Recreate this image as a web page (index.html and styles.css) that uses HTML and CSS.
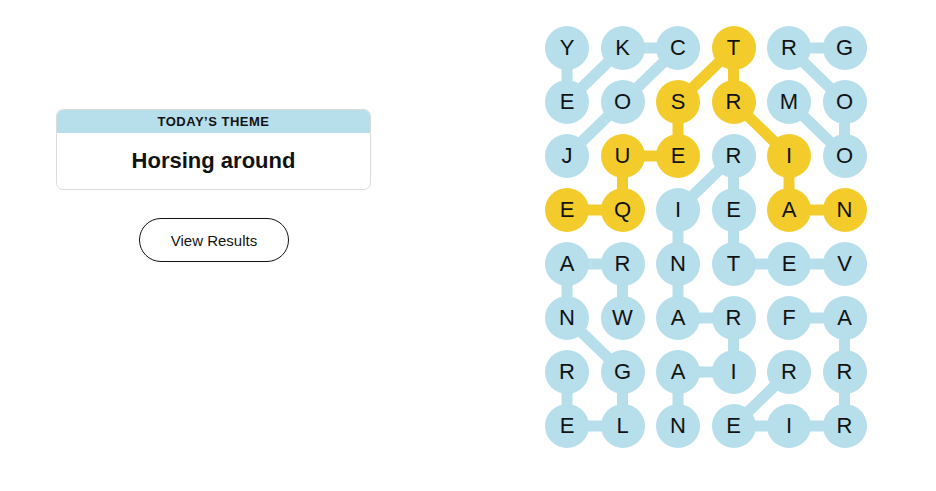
FILE: index.html
```html
<!DOCTYPE html>
<html lang="en">
<head>
<meta charset="utf-8">
<title>Strands</title>
<link rel="stylesheet" href="styles.css">
</head>
<body>
<div class="page">
  <div class="left">
    <div class="theme-card">
      <div class="theme-head">TODAY’S THEME</div>
      <div class="theme-body">Horsing around</div>
    </div>
    <div class="btn-row"><button class="results-btn">View Results</button></div>
  </div>
  <div class="board">
    <svg class="lines" width="322" height="422" viewBox="0 0 322 422">
      <g class="blue" stroke="#b6deeb" stroke-width="11" stroke-linecap="round">
        <!-- JOCKEY -->
        <line x1="22" y1="130" x2="77.5" y2="76"/>
        <line x1="77.5" y1="76" x2="133" y2="22"/>
        <line x1="133" y1="22" x2="77.5" y2="22"/>
        <line x1="77.5" y1="22" x2="22" y2="76"/>
        <line x1="22" y1="76" x2="22" y2="22"/>
        <!-- GROOM -->
        <line x1="299.5" y1="22" x2="244" y2="22"/>
        <line x1="244" y1="22" x2="299.5" y2="76"/>
        <line x1="299.5" y1="76" x2="299.5" y2="130"/>
        <line x1="299.5" y1="130" x2="244" y2="76"/>
        <!-- VETERINARIAN -->
        <line x1="299.5" y1="238" x2="244" y2="238"/>
        <line x1="244" y1="238" x2="188.5" y2="238"/>
        <line x1="188.5" y1="238" x2="188.5" y2="184"/>
        <line x1="188.5" y1="184" x2="188.5" y2="130"/>
        <line x1="188.5" y1="130" x2="133" y2="184"/>
        <line x1="133" y1="184" x2="133" y2="238"/>
        <line x1="133" y1="238" x2="133" y2="292"/>
        <line x1="133" y1="292" x2="188.5" y2="292"/>
        <line x1="188.5" y1="292" x2="188.5" y2="346"/>
        <line x1="188.5" y1="346" x2="133" y2="346"/>
        <line x1="133" y1="346" x2="133" y2="400"/>
        <!-- WRANGLER -->
        <line x1="77.5" y1="292" x2="77.5" y2="238"/>
        <line x1="77.5" y1="238" x2="22" y2="238"/>
        <line x1="22" y1="238" x2="22" y2="292"/>
        <line x1="22" y1="292" x2="77.5" y2="346"/>
        <line x1="77.5" y1="346" x2="77.5" y2="400"/>
        <line x1="77.5" y1="400" x2="22" y2="400"/>
        <line x1="22" y1="400" x2="22" y2="346"/>
        <!-- FARRIER -->
        <line x1="244" y1="292" x2="299.5" y2="292"/>
        <line x1="299.5" y1="292" x2="299.5" y2="346"/>
        <line x1="299.5" y1="346" x2="299.5" y2="400"/>
        <line x1="299.5" y1="400" x2="244" y2="400"/>
        <line x1="244" y1="400" x2="188.5" y2="400"/>
        <line x1="188.5" y1="400" x2="244" y2="346"/>
      </g>
      <g class="gold" stroke="#f3cc2b" stroke-width="11" stroke-linecap="round">
        <!-- EQUESTRIAN -->
        <line x1="22" y1="184" x2="77.5" y2="184"/>
        <line x1="77.5" y1="184" x2="77.5" y2="130"/>
        <line x1="77.5" y1="130" x2="133" y2="130"/>
        <line x1="133" y1="130" x2="133" y2="76"/>
        <line x1="133" y1="76" x2="188.5" y2="22"/>
        <line x1="188.5" y1="22" x2="188.5" y2="76"/>
        <line x1="188.5" y1="76" x2="244" y2="130"/>
        <line x1="244" y1="130" x2="244" y2="184"/>
        <line x1="244" y1="184" x2="299.5" y2="184"/>
      </g>
    </svg>

    <div class="cell">Y</div><div class="cell">K</div><div class="cell">C</div><div class="cell gold">T</div><div class="cell">R</div><div class="cell">G</div>
    <div class="cell">E</div><div class="cell">O</div><div class="cell gold">S</div><div class="cell gold">R</div><div class="cell">M</div><div class="cell">O</div>
    <div class="cell">J</div><div class="cell gold">U</div><div class="cell gold">E</div><div class="cell">R</div><div class="cell gold">I</div><div class="cell">O</div>
    <div class="cell gold">E</div><div class="cell gold">Q</div><div class="cell">I</div><div class="cell">E</div><div class="cell gold">A</div><div class="cell gold">N</div>
    <div class="cell">A</div><div class="cell">R</div><div class="cell">N</div><div class="cell">T</div><div class="cell">E</div><div class="cell">V</div>
    <div class="cell">N</div><div class="cell">W</div><div class="cell">A</div><div class="cell">R</div><div class="cell">F</div><div class="cell">A</div>
    <div class="cell">R</div><div class="cell">G</div><div class="cell">A</div><div class="cell">I</div><div class="cell">R</div><div class="cell">R</div>
    <div class="cell">E</div><div class="cell">L</div><div class="cell">N</div><div class="cell">E</div><div class="cell">I</div><div class="cell">R</div>
  </div>
</div>
</body>
</html>
```
FILE: styles.css
```css
* { box-sizing: border-box; }
html, body { margin: 0; padding: 0; background: #ffffff; }
body {
  font-family: "Liberation Sans", Arial, sans-serif;
  color: #121212;
}
.page {
  display: flex;
  align-items: flex-start;
  padding-left: 56px;
}
.left {
  width: 315px;
  margin-top: 109px;
  display: flex;
  flex-direction: column;
}
.theme-card {
  border: 1px solid #dcdcdc;
  border-radius: 7px;
  overflow: hidden;
  height: 81px;
  display: flex;
  flex-direction: column;
}
.theme-head {
  background: #b6deeb;
  height: 23px;
  line-height: 23px;
  text-align: center;
  font-size: 13px;
  font-weight: bold;
  letter-spacing: 0.5px;
  color: #121212;
}
.theme-body {
  flex: 1;
  display: flex;
  align-items: center;
  justify-content: center;
  font-size: 22px;
  font-weight: bold;
  color: #121212;
}
.btn-row {
  display: flex;
  justify-content: center;
  margin-top: 28px;
}
.results-btn {
  width: 150px;
  height: 44px;
  border: 1px solid #121212;
  border-radius: 22px;
  background: #ffffff;
  font-family: "Liberation Sans", Arial, sans-serif;
  font-size: 15px;
  color: #121212;
  padding: 0;
  margin-left: 1px;
}
.board {
  position: relative;
  margin-left: 174px;
  margin-top: 26px;
  display: grid;
  grid-template-columns: repeat(6, 44px);
  grid-template-rows: repeat(8, 44px);
  column-gap: 11.5px;
  row-gap: 10px;
}
.lines {
  position: absolute;
  left: 0;
  top: 0;
  z-index: 0;
}
.cell {
  position: relative;
  z-index: 1;
  width: 44px;
  height: 44px;
  border-radius: 50%;
  background: #b6deeb;
  display: flex;
  align-items: center;
  justify-content: center;
  font-size: 22px;
  color: #121212;
}
.cell.gold { background: #f3cc2b; }
```
